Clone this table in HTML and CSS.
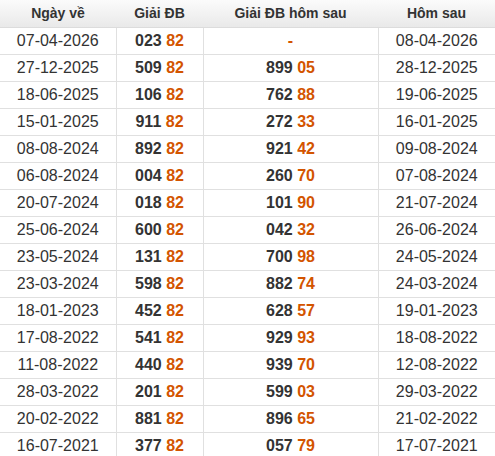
FILE: index.html
```html
<!DOCTYPE html>
<html>
<head>
<meta charset="utf-8">
<link rel="stylesheet" href="styles.css">
</head>
<body>
<table class="kq">
<colgroup><col class="c1"><col class="c2"><col class="c3"><col class="c4"></colgroup>
<thead>
<tr><th>Ngày về</th><th>Giải ĐB</th><th>Giải ĐB hôm sau</th><th>Hôm sau</th></tr>
</thead>
<tbody>
<tr><td>07-04-2026</td><td class="num">023 <span class="hl">82</span></td><td class="num"><span class="hl">-</span></td><td>08-04-2026</td></tr>
<tr><td>27-12-2025</td><td class="num">509 <span class="hl">82</span></td><td class="num">899 <span class="hl">05</span></td><td>28-12-2025</td></tr>
<tr><td>18-06-2025</td><td class="num">106 <span class="hl">82</span></td><td class="num">762 <span class="hl">88</span></td><td>19-06-2025</td></tr>
<tr><td>15-01-2025</td><td class="num">911 <span class="hl">82</span></td><td class="num">272 <span class="hl">33</span></td><td>16-01-2025</td></tr>
<tr><td>08-08-2024</td><td class="num">892 <span class="hl">82</span></td><td class="num">921 <span class="hl">42</span></td><td>09-08-2024</td></tr>
<tr><td>06-08-2024</td><td class="num">004 <span class="hl">82</span></td><td class="num">260 <span class="hl">70</span></td><td>07-08-2024</td></tr>
<tr><td>20-07-2024</td><td class="num">018 <span class="hl">82</span></td><td class="num">101 <span class="hl">90</span></td><td>21-07-2024</td></tr>
<tr><td>25-06-2024</td><td class="num">600 <span class="hl">82</span></td><td class="num">042 <span class="hl">32</span></td><td>26-06-2024</td></tr>
<tr><td>23-05-2024</td><td class="num">131 <span class="hl">82</span></td><td class="num">700 <span class="hl">98</span></td><td>24-05-2024</td></tr>
<tr><td>23-03-2024</td><td class="num">598 <span class="hl">82</span></td><td class="num">882 <span class="hl">74</span></td><td>24-03-2024</td></tr>
<tr><td>18-01-2023</td><td class="num">452 <span class="hl">82</span></td><td class="num">628 <span class="hl">57</span></td><td>19-01-2023</td></tr>
<tr><td>17-08-2022</td><td class="num">541 <span class="hl">82</span></td><td class="num">929 <span class="hl">93</span></td><td>18-08-2022</td></tr>
<tr><td>11-08-2022</td><td class="num">440 <span class="hl">82</span></td><td class="num">939 <span class="hl">70</span></td><td>12-08-2022</td></tr>
<tr><td>28-03-2022</td><td class="num">201 <span class="hl">82</span></td><td class="num">599 <span class="hl">03</span></td><td>29-03-2022</td></tr>
<tr><td>20-02-2022</td><td class="num">881 <span class="hl">82</span></td><td class="num">896 <span class="hl">65</span></td><td>21-02-2022</td></tr>
<tr><td>16-07-2021</td><td class="num">377 <span class="hl">82</span></td><td class="num">057 <span class="hl">79</span></td><td>17-07-2021</td></tr>
</tbody>
</table>
</body>
</html>
```

FILE: styles.css
```css
html, body {
  margin: 0;
  padding: 0;
  background: #fff;
}
.kq {
  width: 495px;
  border-collapse: collapse;
  table-layout: fixed;
  font-family: "Liberation Sans", Arial, sans-serif;
  color: #333;
}
.c1 { width: 116px; }
.c2 { width: 87px; }
.c3 { width: 175px; }
.c4 { width: 117px; }
.kq th {
  height: 26px;
  padding: 0;
  font-size: 14px;
  font-weight: bold;
  color: #333;
  text-align: center;
  background: linear-gradient(#fbfbfb, #e9e9e9);
  border-bottom: 1px solid #dcdcdc;
  border-left: none;
  border-right: none;
  vertical-align: middle;
  padding-bottom: 1px;
}
.kq td {
  height: 26px;
  padding: 0;
  font-size: 16px;
  text-align: center;
  vertical-align: middle;
  border: 1px solid #e0e0e0;
  border-top: none;
}
.kq td:first-child { border-left: none; }
.kq td:last-child { border-right: none; }
.kq td.num { font-weight: bold; }
.hl { color: #d35400; }
```
